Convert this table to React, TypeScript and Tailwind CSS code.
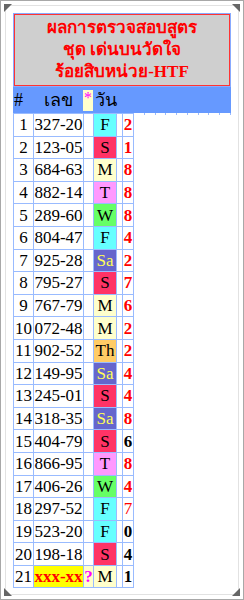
import React from 'react';

type Row = { no: string; day: string; res: string; red: boolean; bold?: boolean };

const ROWS: Row[] = [
  { no: '327-20', day: 'F', res: '2', red: true },
  { no: '123-05', day: 'S', res: '1', red: true },
  { no: '684-63', day: 'M', res: '8', red: true },
  { no: '882-14', day: 'T', res: '8', red: true },
  { no: '289-60', day: 'W', res: '8', red: true },
  { no: '804-47', day: 'F', res: '4', red: true },
  { no: '925-28', day: 'Sa', res: '2', red: true },
  { no: '795-27', day: 'S', res: '7', red: true },
  { no: '767-79', day: 'M', res: '6', red: true },
  { no: '072-48', day: 'M', res: '2', red: true },
  { no: '902-52', day: 'Th', res: '2', red: true },
  { no: '149-95', day: 'Sa', res: '4', red: true },
  { no: '245-01', day: 'S', res: '4', red: true },
  { no: '318-35', day: 'Sa', res: '8', red: true },
  { no: '404-79', day: 'S', res: '6', red: false },
  { no: '866-95', day: 'T', res: '8', red: true },
  { no: '406-26', day: 'W', res: '4', red: true },
  { no: '297-52', day: 'F', res: '7', red: true, bold: false },
  { no: '523-20', day: 'F', res: '0', red: false },
  { no: '198-18', day: 'S', res: '4', red: false },
];

const DAY: Record<string, string> = {
  F: 'bg-[#66ffff] text-black',
  S: 'bg-[#ff3366] text-black',
  M: 'bg-[#ffffcc] text-black',
  T: 'bg-[#ff99ff] text-black',
  W: 'bg-[#66ff66] text-black',
  Sa: 'bg-[#6666cc] text-[#ffff55]',
  Th: 'bg-[#ffcc66] text-black',
};

const cell = 'border border-[#99bbff] p-0 text-center whitespace-nowrap';

export default function App() {
  return (
    <div className="relative w-[244px] h-[600px] overflow-hidden border border-[#a8a8a8] bg-white p-1 font-['Liberation_Serif',serif]">
      {/* corner marks */}
      <div className="absolute left-[3px] top-[3px] w-2 h-2 bg-[#666] [clip-path:polygon(0_0,100%_0,0_100%)]" />
      <div className="absolute right-[3px] top-[3px] w-2 h-2 bg-[#666] [clip-path:polygon(0_0,100%_0,100%_100%)]" />
      <div className="absolute left-[3px] bottom-[3px] w-2 h-2 bg-[#666] [clip-path:polygon(0_0,0_100%,100%_100%)]" />
      <div className="absolute right-[3px] bottom-[3px] w-2 h-2 bg-[#666] [clip-path:polygon(100%_0,100%_100%,0_100%)]" />

      <div className="h-full border border-[#e2e2e2] p-[7px]">
        {/* title */}
        <div className="border border-[#88aaff]">
          <div className="border border-[#ff3333] bg-[#cfcfcf] py-[2px] text-center text-[17px] font-bold leading-[22px] text-[#ff0000]">
            <div>ผลการตรวจสอบสูตร</div>
            <div>ชุด เด่นบนวัดใจ</div>
            <div>ร้อยสิบหน่วย-HTF</div>
          </div>
        </div>

        {/* header */}
        <div className="flex h-[26px] items-center bg-[#6699ff] text-[18px] text-black">
          <div className="w-[20px] pl-[1px]">#</div>
          <div className="w-[50px] text-center">เลข</div>
          <div className="flex h-[21px] w-[10px] justify-center bg-[#ffffcc] text-[16px] leading-[16px] text-[#ff00ff]">*</div>
          <div className="pl-[2px]">วัน</div>
        </div>

        {/* rows */}
        <div className="flex items-start">
          <table className="shrink-0 border-collapse table-fixed text-[17px] leading-none text-black">
            <colgroup>
              <col className="w-[20px]" />
              <col className="w-[50px]" />
              <col className="w-[10px]" />
              <col className="w-[23px]" />
              <col className="w-[6px]" />
              <col className="w-[11px]" />
            </colgroup>
            <tbody>
              {ROWS.map((r, i) => (
                <tr key={i} className="h-[22.6px]">
                  <td className={cell}>{i + 1}</td>
                  <td className={cell}>{r.no}</td>
                  <td className={cell} />
                  <td className={`${cell} ${DAY[r.day]}`}>{r.day}</td>
                  <td className={cell} />
                  <td className={`${cell} ${r.red ? 'text-[#ff0000]' : 'text-black'} ${r.bold === false ? '' : 'font-bold'}`}>{r.res}</td>
                </tr>
              ))}
              <tr className="h-[22.6px]">
                <td className={cell}>21</td>
                <td className={`${cell} bg-[#ffff00] font-bold text-[#ff0000]`}>xxx-xx</td>
                <td className={`${cell} bg-[#ffffcc] font-bold text-[#ff00ff]`}>?</td>
                <td className={`${cell} ${DAY.M}`}>M</td>
                <td className={cell} />
                <td className={`${cell} font-bold`}>1</td>
              </tr>
            </tbody>
          </table>
          <div className="flex h-[2px] flex-1">
            {Array.from({ length: 9 }).map((_, i) => (
              <div key={i} className="flex-1 border-r border-[#99bbff]" />
            ))}
          </div>
        </div>
      </div>
    </div>
  );
}
